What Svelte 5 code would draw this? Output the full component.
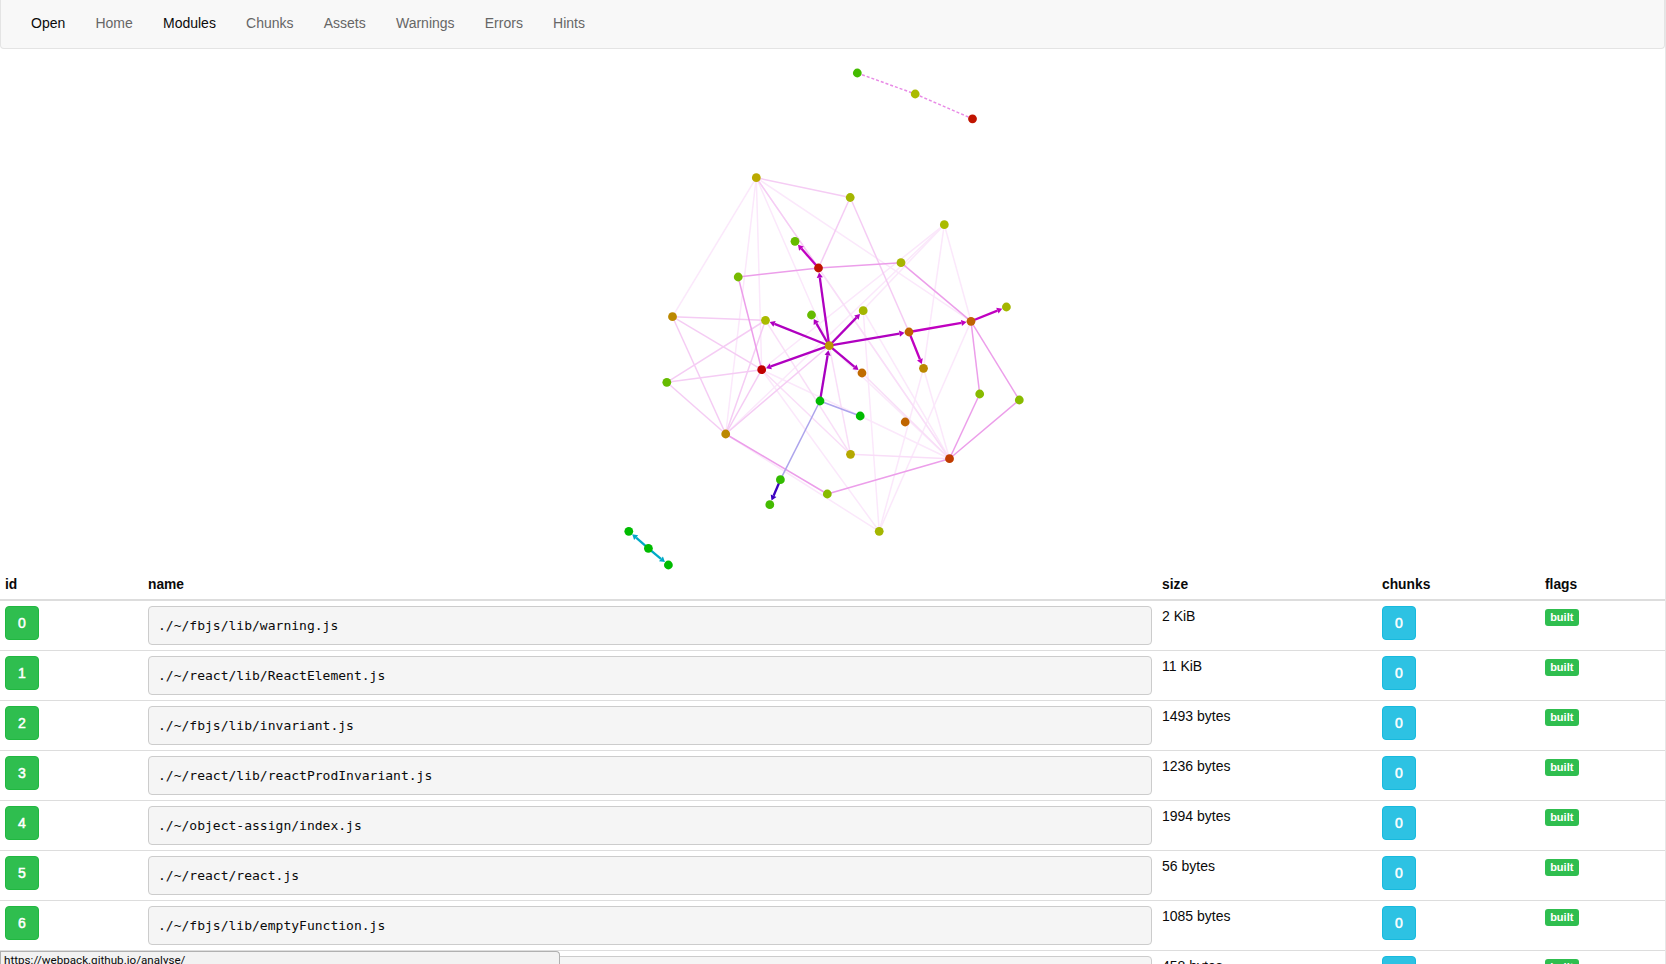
<script>
  const nav = ['Open', 'Home', 'Modules', 'Chunks', 'Assets', 'Warnings', 'Errors', 'Hints'];

  const nodes = {
    a: [857.3, 73, '#4b0'], b: [915.2, 94, '#ab0'], c: [972.5, 118.8, '#c01400'],
    n1: [756.3, 177.7, '#ba0'], n2: [850.2, 197.5, '#a4b600'], n3: [944.3, 224.7, '#ab0'],
    n4: [795, 241.3, '#6b0'], n5: [818.5, 268, '#c01400'], n6: [901, 262.7, '#a8b400'],
    n7: [738.2, 277, '#7b0'], n8: [672.5, 316.7, '#b80'], n9: [765.5, 320.3, '#ab0'],
    n10: [811.5, 315, '#6b0'], n11: [829.2, 345.7, '#b90'], n12: [761.7, 369.7, '#c00000'],
    n13: [666.8, 382.3, '#6b0'], n14: [725.7, 434, '#b80'], n15: [820, 401, '#0b0'],
    n16: [863.2, 310.7, '#a4b600'], n17: [909, 332, '#c06400'], n18: [971, 321.3, '#c06400'],
    n19: [1006.4, 307, '#a4b600'], n20: [923.5, 368.3, '#b80'], n21: [862, 373, '#c06a00'],
    n22: [979.7, 394, '#8b0'], n23: [1019.3, 400, '#8b0'], n24: [860.2, 416, '#0b0'],
    n25: [905.2, 422, '#c06400'], n26: [850.5, 454.3, '#b5a800'], n27: [949.5, 458.7, '#c03c00'],
    n28: [780.4, 479.7, '#3b0'], n29: [769.8, 504.7, '#4b0'], n30: [827.3, 494, '#8b0'],
    n31: [879.2, 531.3, '#a4b600'], n32: [628.8, 531.3, '#0b0'], n33: [648.4, 548.3, '#0b0'],
    n34: [668.4, 565, '#0b0']
  };

  const weak = 'n1-n8 n1-n12 n1-n14 n1-n11 n1-n27 n1-n18 n16-n27 n20-n27 n24-n27 n11-n27 n12-n24 n12-n31 n3-n12 n3-n11 n3-n14 n3-n20 n3-n18 n20-n31 n18-n31 n16-n31 n14-n31'.split(' ');
  const soft = 'n5-n27 n9-n26 n12-n26 n11-n26 n21-n27 n26-n27'.split(' ');
  const light = 'n1-n2 n1-n5 n2-n5 n2-n17 n8-n9 n8-n12 n8-n14 n9-n13 n12-n13 n13-n14 n9-n14 n12-n14 n11-n14'.split(' ');
  const medium = 'n5-n7 n7-n12 n5-n6 n6-n18 n18-n22 n18-n23 n22-n27 n23-n27 n27-n30 n14-n30'.split(' ');
  const groups = [
    { edges: weak, color: '#fbe8fb' },
    { edges: soft, color: '#f9def8' },
    { edges: light, color: '#f5ccf4' },
    { edges: medium, color: '#ec9eea' },
    { edges: ['n15-n24', 'n15-n28'], color: '#ada4ec' }
  ];
  const strong = [
    ['n5-n4', '#c000c0'], ['n11-n5', '#b000c0'], ['n11-n9', '#b000c0'], ['n11-n10', '#b000c0'],
    ['n11-n12', '#b000c0'], ['n11-n16', '#b000c0'], ['n11-n17', '#b000c0'], ['n11-n21', '#b000c0'],
    ['n15-n11', '#a800c0'], ['n17-n18', '#c000c0'], ['n17-n20', '#c000c0'], ['n18-n19', '#c000c0'],
    ['n28-n29', '#3c00c0'], ['n33-n32', '#00aac6'], ['n33-n34', '#00aac6']
  ];

  function line(e) {
    const [s, t] = e.split('-').map((k) => nodes[k]);
    return { x1: s[0], y1: s[1], x2: t[0], y2: t[1] };
  }
  function arrow(e) {
    const l = line(e);
    const dx = l.x2 - l.x1, dy = l.y2 - l.y1, d = Math.hypot(dx, dy);
    const ux = dx / d, uy = dy / d;
    const tx = l.x2 - ux * 4.5, ty = l.y2 - uy * 4.5;
    const bx = tx - ux * 5.2, by = ty - uy * 5.2;
    return {
      shaft: { ...l, x2: bx, y2: by },
      head: `${tx},${ty} ${bx - uy * 3.1},${by + ux * 3.1} ${bx + uy * 3.1},${by - ux * 3.1}`
    };
  }

  const rows = [
    ['./~/fbjs/lib/warning.js', '2 KiB'],
    ['./~/react/lib/ReactElement.js', '11 KiB'],
    ['./~/fbjs/lib/invariant.js', '1493 bytes'],
    ['./~/react/lib/reactProdInvariant.js', '1236 bytes'],
    ['./~/object-assign/index.js', '1994 bytes'],
    ['./~/react/react.js', '56 bytes'],
    ['./~/fbjs/lib/emptyFunction.js', '1085 bytes'],
    ['', '458 bytes']
  ];
</script>

<div class="page">
  <nav>
    {#each nav as item}
      <a class:dark={item === 'Open' || item === 'Modules'} href="#top">{item}</a>
    {/each}
  </nav>

  <svg class="graph" width="1665" height="523" viewBox="0 49 1665 523">
    {#each groups as g}
      {#each g.edges as e}
        <line {...line(e)} stroke={g.color} stroke-width="1.5" />
      {/each}
    {/each}
    <line {...line('a-b')} stroke="#e88ae6" stroke-width="1.5" stroke-dasharray="3 2" />
    <line {...line('b-c')} stroke="#e88ae6" stroke-width="1.5" stroke-dasharray="3 2" />
    {#each strong as [e, color]}
      {@const a = arrow(e)}
      <line {...a.shaft} stroke={color} stroke-width="2.3" />
      <polygon points={a.head} fill={color} />
    {/each}
    {#each Object.values(nodes) as [x, y, color]}
      <circle cx={x} cy={y} r="4.4" fill={color} />
    {/each}
  </svg>

  <table>
    <thead>
      <tr><th class="id">id</th><th class="name">name</th><th class="size">size</th><th class="chunks">chunks</th><th>flags</th></tr>
    </thead>
    <tbody>
      {#each rows as [name, size], i}
        <tr>
          <td><span class="btn green">{name ? i : ''}</span></td>
          <td><pre>{name}</pre></td>
          <td>{size}</td>
          <td><span class="btn blue">{name ? 0 : ''}</span></td>
          <td><span class="label">built</span></td>
        </tr>
      {/each}
    </tbody>
  </table>

  <div class="status">https://webpack.github.io/analyse/</div>
</div>

<style>
  :global(body) { overflow: hidden; }
  .page {
    box-sizing: border-box;
    position: relative;
    width: 1666px;
    height: 964px;
    overflow: hidden;
    background: #fff;
    border-right: 1px solid #e6e6e6;
    color: #0a0a0a;
    font: 14px/20px "Liberation Sans", Arial, sans-serif;
  }
  nav {
    box-sizing: border-box;
    display: flex;
    gap: 30.2px;
    height: 49px;
    padding: 13px 30px;
    background: #f8f8f8;
    border: 1px solid #e4e4e4;
    border-top: 0;
    border-radius: 0 0 4px 4px;
  }
  a { color: #666; text-decoration: none; }
  a.dark { color: #0a0a0a; }
  .graph { display: block; }
  table {
    width: 1665px;
    table-layout: fixed;
    border-collapse: separate;
    border-spacing: 0;
  }
  th {
    height: 20px;
    padding: 3px 5px 4px;
    border-bottom: 2px solid #ddd;
    text-align: left;
    font-size: 13.8px;
    line-height: 20px;
  }
  .id { width: 133px; }
  .name { width: 1004px; }
  .size { width: 210px; }
  .chunks { width: 153px; }
  td {
    height: 39px;
    padding: 5px;
    border-bottom: 1px solid #ddd;
    vertical-align: top;
  }
  pre {
    box-sizing: border-box;
    height: 39px;
    margin: 0;
    padding: 9px;
    background: #f5f5f5;
    border: 1px solid #ccc;
    border-radius: 4px;
    font: 13.03px/20px "DejaVu Sans Mono", monospace;
  }
  .btn {
    box-sizing: border-box;
    display: block;
    width: 34px;
    height: 34px;
    padding-top: 6px;
    border: 1px solid;
    border-radius: 4px;
    color: #fff;
    text-align: center;
    -webkit-text-stroke: 0.5px #fff;
  }
  .green { background: #2fbe4f; border-color: #20b840; }
  .blue { background: #2dc2e3; border-color: #16bade; }
  .label {
    display: block;
    box-sizing: border-box;
    width: 33.5px;
    height: 17px;
    margin-top: 3px;
    border-radius: 3px;
    background: #2fbe4f;
    color: #fff;
    font-size: 11px;
    font-weight: bold;
    line-height: 17px;
    text-align: center;
  }
  .status {
    position: absolute;
    box-sizing: border-box;
    left: 0;
    bottom: 0;
    width: 560px;
    height: 13px;
    overflow: hidden;
    padding-left: 3px;
    background: #f2f2f2;
    border: 1px solid #b0b0b0;
    border-width: 1px 1px 0 1px;
    border-radius: 0 4px 0 0;
    font: 11.65px/16px Roboto, sans-serif;
    white-space: nowrap;
  }
</style>
